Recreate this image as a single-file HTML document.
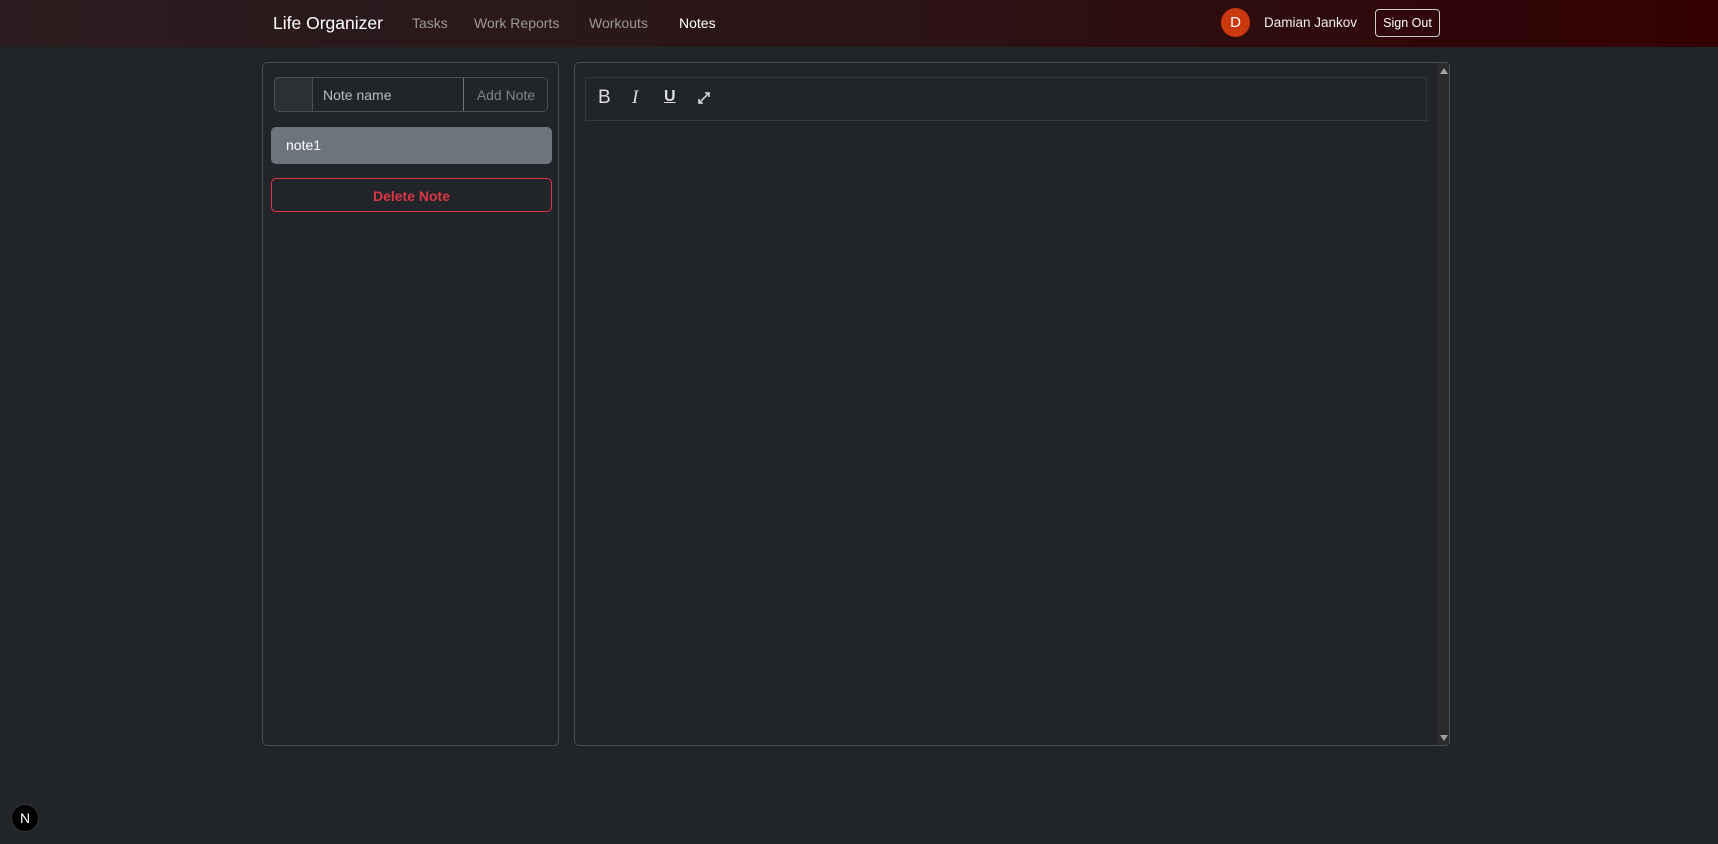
<!DOCTYPE html>
<html><head><style>
*{box-sizing:border-box;margin:0;padding:0}
body{width:1718px;height:844px;background:#212529;font-family:"Liberation Sans",sans-serif;position:relative;overflow:hidden;color:#fff}
.hdr{position:absolute;left:0;top:0;width:1718px;height:47px;background:linear-gradient(90deg,#2b1c1f 0%,#2a1517 50%,#330002 100%)}
.a{position:absolute;white-space:nowrap}
.nav{font-size:14px;color:#9a9a9a;top:15px}
.panel{position:absolute;border:1px solid #495057;border-radius:5px}
</style></head><body>
<div class="hdr">
<div class="a" style="left:273px;top:13px;font-size:17.5px;color:#fff">Life Organizer</div>
<div class="a nav" style="left:412px">Tasks</div>
<div class="a nav" style="left:474px">Work Reports</div>
<div class="a nav" style="left:589px">Workouts</div>
<div class="a nav" style="left:679px;color:#fff">Notes</div>
<div class="a" style="left:1221px;top:8px;width:29px;height:29px;border-radius:50%;background:#c9380f;color:#fff;font-size:15px;text-align:center;line-height:29px">D</div>
<div class="a" style="left:1264px;top:15px;font-size:13.5px;color:#eee">Damian Jankov</div>
<div class="a" style="left:1375px;top:9px;width:65px;height:28px;border:1px solid #ccc;border-radius:4px;font-size:12.5px;text-align:center;line-height:26px;color:#fff">Sign Out</div>
</div>

<div class="panel" style="left:262px;top:62px;width:297px;height:684px">
<div class="a" style="left:11px;top:14px;width:274px;height:35px;border:1px solid #495057;border-radius:5px;overflow:hidden">
 <div class="a" style="left:0;top:0;width:38px;height:33px;background:#2b3035;border-right:1px solid #495057"></div>
 <div class="a" style="left:48px;top:9px;font-size:14px;color:#b8bcc0">Note name</div>
 <div class="a" style="left:188px;top:0;width:85px;height:33px;border-left:1px solid #6c757d;font-size:14px;color:#7b838a;text-align:center;line-height:35px">Add Note</div>
</div>
<div class="a" style="left:8px;top:64px;width:281px;height:37px;background:#6c757d;border-radius:5px;font-size:14px;color:#fff;line-height:37px;padding-left:15px">note1</div>
<div class="a" style="left:8px;top:115px;width:281px;height:34px;border:1px solid #dc3545;border-radius:5px;font-size:14px;font-weight:bold;color:#dc3545;text-align:center;line-height:34px">Delete Note</div>
</div>

<div class="panel" style="left:574px;top:62px;width:876px;height:684px;overflow:hidden">
<div class="a" style="left:10px;top:14px;width:842px;height:44px;border:1px solid #343a40"></div>
<div class="a" style="left:23px;top:24px;font-size:19px;color:#ddd">B</div>
<div class="a" style="left:57px;top:24px;font-size:19px;color:#ddd;font-style:italic;font-family:'Liberation Serif',serif">I</div>
<div class="a" style="left:89px;top:25px;font-size:16px;color:#ddd;font-weight:bold;text-decoration:underline">U</div>
<svg class="a" style="left:121px;top:27px" width="16" height="16" viewBox="0 0 16 16"><path d="M3 13L13 3M9 3h4v4M3 9v4h4" stroke="#ddd" stroke-width="1.5" fill="none"/></svg>
<div class="a" style="left:862px;top:0;width:13px;height:683px;background:#2b2b2b"></div>
<svg class="a" style="left:864px;top:4px" width="10" height="8"><path d="M1 7L5 1L9 7Z" fill="#a0a0a0"/></svg>
<svg class="a" style="left:864px;top:671px" width="10" height="8"><path d="M1 1L5 7L9 1Z" fill="#a0a0a0"/></svg>
</div>

<div class="a" style="left:11px;top:804px;width:28px;height:28px;border-radius:50%;background:#000;border:1px solid #333;color:#fff;font-size:14px;text-align:center;line-height:26px">N</div>
</body></html>
